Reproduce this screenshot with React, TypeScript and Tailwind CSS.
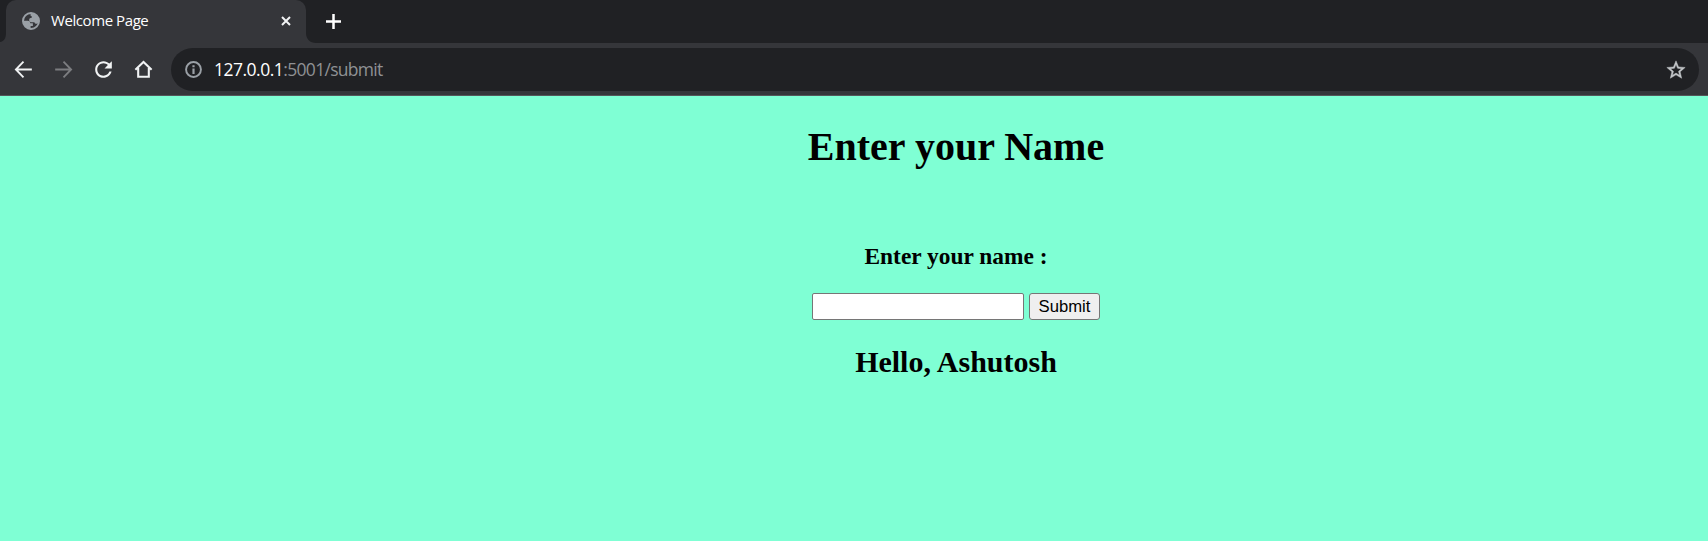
import type { ReactNode } from "react";

function Icon({ className, children }: { className: string; children: ReactNode }) {
  return (
    <svg viewBox="0 0 24 24" fill="none" className={"block shrink-0 " + className}>
      {children}
    </svg>
  );
}

function TabStrip() {
  return (
    <div className="flex h-[43px] bg-[#202124]">
      <svg viewBox="0 0 6 43" className="block h-[43px] w-[6px] shrink-0" fill="#35363a">
        <path d="M6 33C6 38 4 41.500 0 42V43H6Z" />
      </svg>
      <div className="flex h-[43px] w-[300px] shrink-0 items-center rounded-t-[10px] bg-[#35363a] pr-[14px] pb-px pl-[16px]">
        <Icon className="size-[18px] text-[#9aa0a6]">
          <circle cx="12" cy="12" r="10.700" stroke="currentColor" strokeWidth="2.600" />
          <path
            fill="currentColor"
            d="M12 1.500C16 1.500 21 4 22.500 9V14.500C20 16.500 17 15.500 16.500 13.500H12.500C10.500 13.500 9.500 12 9.500 10.500C9.500 8.500 11 7.500 13 7.500V5.500C11.500 5.500 10.500 4 12 1.500Z"
          />
          <path
            fill="currentColor"
            d="M1.500 11.500H7.500C10.500 11.500 11 13 11 15H14.500V18.500H11.500V22.500C6 22 1.500 18 1.500 11.500Z"
          />
        </Icon>
        <span className="ml-[11px] flex-1 pb-[2px] text-[15px] leading-[20px] tracking-[-0.420px] whitespace-nowrap text-white">
          Welcome Page
        </span>
        <Icon className="size-[12px] text-[#f1f3f4]">
          <path d="M4 4L20 20M20 4L4 20" stroke="currentColor" strokeWidth="4" />
        </Icon>
      </div>
      <svg viewBox="0 0 10 43" className="block h-[43px] w-[10px] shrink-0" fill="#35363a">
        <path d="M0 33C0 39 4 43 10 43H0Z" />
      </svg>
      <div className="flex items-center pl-[10px] text-white">
        <Icon className="size-[15px]">
          <path d="M12 0V24M0 12H24" stroke="currentColor" strokeWidth="4" />
        </Icon>
      </div>
    </div>
  );
}

function Toolbar() {
  return (
    <div className="flex h-[53px] items-start border-b border-[#55565a] bg-[#35363a] pt-[5px] pr-[9px] pl-[11px]">
      <div className="flex h-[42px] w-[160px] shrink-0 items-center gap-[15px]">
        <Icon className="size-[25px] text-[#f1f3f4]">
          <path d="M20 12H5M12 4.500L4.700 12L12 19.500" stroke="currentColor" strokeWidth="1.800" />
        </Icon>
        <Icon className="size-[25px] text-[#7c7d80]">
          <path d="M4 12H19M12 4.500L19.300 12L12 19.500" stroke="currentColor" strokeWidth="1.800" />
        </Icon>
        <Icon className="size-[25px] text-[#f1f3f4]">
          <path
            fill="currentColor"
            d="M17.650 6.350C16.200 4.900 14.210 4 12 4c-4.420 0-7.990 3.580-7.990 8s3.570 8 7.990 8c3.730 0 6.840-2.550 7.730-6h-2.080c-.820 2.330-3.040 4-5.650 4-3.310 0-6-2.690-6-6s2.690-6 6-6c1.660 0 3.140.690 4.220 1.780L13 11h7V4l-2.350 2.350z"
          />
        </Icon>
        <Icon className="size-[25px] text-[#f1f3f4]">
          <path d="M4.200 12.200L12 4.800L19.800 12.200M6.900 10.500V19H17.100V10.500" stroke="currentColor" strokeWidth="2" />
        </Icon>
      </div>
      <div className="flex h-[43px] flex-1 items-center rounded-full bg-[#202124] pr-[12px] pl-[12px]">
        <Icon className="size-[21px] text-[#9aa0a6]">
          <circle cx="12" cy="12" r="8.500" stroke="currentColor" strokeWidth="2.200" />
          <path d="M12 7V9.300M12 10.800V17" stroke="currentColor" strokeWidth="2.500" />
        </Icon>
        <div className="ml-[10px] flex-1 pb-px text-[17.500px] leading-[24px] whitespace-nowrap text-[#8f9194]">
          <span className="tracking-[-0.500px] text-white">127.0.0.1</span>
          <span className="tracking-[-0.700px]">:5001/submit</span>
        </div>
        <Icon className="size-[22px] text-[#c4c7ca]">
          <path
            stroke="currentColor"
            strokeWidth="0.500"
            fill="currentColor"
            d="M22 9.240l-7.190-.620L12 2 9.190 8.630 2 9.240l5.460 4.730L5.820 21 12 17.270 18.180 21l-1.630-7.030L22 9.240zM12 15.400l-3.760 2.270 1-4.280-3.320-2.880 4.380-.380L12 6.100l1.710 4.040 4.380.380-3.320 2.880 1 4.280L12 15.400z"
          />
        </Icon>
      </div>
    </div>
  );
}

export default function App() {
  return (
    <div className="flex h-[541px] w-[1708px] flex-col overflow-hidden bg-[#7fffd4] font-['Open_Sans','Noto_Sans',sans-serif]">
      <TabStrip />
      <Toolbar />
      <main className="flex flex-1 flex-col items-center pt-[28px] pl-[204px] font-['Liberation_Serif',serif] font-bold text-black">
        <h1 className="text-[40px] leading-[46px]">Enter your Name</h1>
        <h3 className="mt-[73px] text-[23.400px] leading-[27px]">Enter your name :</h3>
        <form className="mt-[23px] flex gap-[5px]" onSubmit={(e) => e.preventDefault()}>
          <input
            type="text"
            aria-label="Name"
            className="h-[27px] w-[212px] rounded-[2px] border border-[#767676] bg-white px-1"
          />
          <button
            type="submit"
            className="h-[27px] w-[71px] rounded-[3px] border border-[#767676] bg-[#efefef] font-['Liberation_Sans',sans-serif] text-[16.667px] leading-[24px] font-normal"
          >
            Submit
          </button>
        </form>
        <h2 className="mt-[25px] text-[30px] leading-[34px]">Hello, Ashutosh</h2>
      </main>
    </div>
  );
}
